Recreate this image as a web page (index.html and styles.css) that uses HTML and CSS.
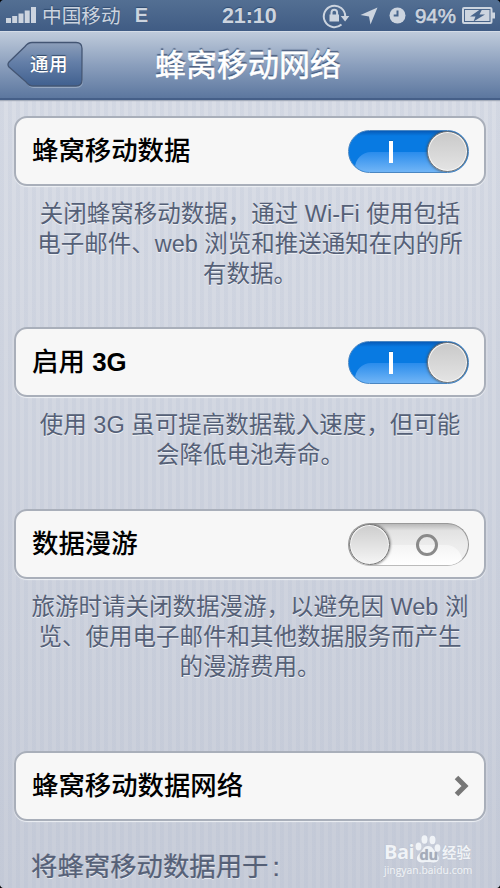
FILE: index.html
```html
<!DOCTYPE html>
<html lang="zh-CN">
<head>
<meta charset="utf-8">
<title>蜂窝移动网络</title>
<link rel="stylesheet" href="styles.css">
</head>
<body>
<div class="phone">
  <header class="status">
    <div class="status-left">
      <svg class="signal" width="31" height="18" viewBox="0 0 31 18"><path d="M0 12h5v5H0zM6.200 10h5v7h-5zM12.500 7.500h5V17h-5zM18.700 4.500h5V17h-5zM25 1h5v16h-5z"/></svg>
      <span class="carrier">中国移动</span>
      <b class="edge">E</b>
    </div>
    <b class="clock">21:10</b>
    <div class="status-right">
      <svg class="lock" width="28" height="26" viewBox="0 0 28 26"><path class="line" d="M19.500 21.500A10.700 10.700 0 1 1 23.200 13.500"/><path d="M18.700 13h8.600l-4.200 5.500zM7.500 11.500H17v7H7.500z"/><path class="line thin" d="M9.500 12V9.500a2.800 2.800 0 0 1 5.600 0V12"/></svg>
      <svg class="arrow" width="18" height="18" viewBox="0 0 18 18"><path d="M17.500.5 10.500 17.500 9 9.500.5 8z"/></svg>
      <svg class="alarm" width="17" height="17" viewBox="0 0 17 17"><circle cx="8.500" cy="8.500" r="8"/><path class="cut" d="M8.500 3.500v5H4.700"/></svg>
      <span class="percent">94%</span>
      <svg class="battery" width="34" height="18" viewBox="0 0 34 18"><rect class="line" x="1" y="1" width="28.500" height="15" rx="1"/><path d="M3 3h24.500v11H3zM30 5.500h3v6h-3z"/><path class="bolt" d="m18 2.500-10 7h5.500L11.500 14.500 23 7.500h-5.500L20 2.500z"/></svg>
    </div>
  </header>
  <nav class="nav">
    <div class="back">
      <svg width="78" height="49" viewBox="0 0 78 49">
        <defs><linearGradient id="bk" x1="0" y1="0" x2="0" y2="1"><stop offset="0" stop-color="#8d9fba"/><stop offset=".45" stop-color="#647fa8"/><stop offset="1" stop-color="#40608f"/></linearGradient></defs>
        <path class="back-glow" d="M24 2h45q7 0 7 7v31q0 7-7 7H27q-4 0-7-4L2.500 27q-1.500-2 0-4L17 6q3-4 7-4z"/>
        <path class="back-shape" d="M25 1.500h44q6 0 6 6V39q0 6-6 6H26q-4 0-7-4L2 26q-2-2.500 0-5L18 5.500q3-4 7-4z"/>
      </svg>
      <span>通用</span>
    </div>
    <h1>蜂窝移动网络</h1>
  </nav>
  <main>
    <section class="group g1">
      <div class="card"><span>蜂窝移动数据</span><div class="switch on"><i class="bar"></i><i class="knob"></i></div></div>
      <p>关闭蜂窝移动数据，通过 Wi-Fi 使用包括<br>电子邮件、web 浏览和推送通知在内的所<br>有数据。</p>
    </section>
    <section class="group g2">
      <div class="card"><span>启用 <b>3G</b></span><div class="switch on"><i class="bar"></i><i class="knob"></i></div></div>
      <p>使用 3G 虽可提高数据载入速度，但可能<br>会降低电池寿命。</p>
    </section>
    <section class="group g3">
      <div class="card"><span>数据漫游</span><div class="switch off"><i class="ring"></i><i class="knob"></i></div></div>
      <p>旅游时请关闭数据漫游，以避免因 Web 浏<br>览、使用电子邮件和其他数据服务而产生<br>的漫游费用。</p>
    </section>
    <section class="group g4">
      <div class="card"><span>蜂窝移动数据网络</span><svg class="chevron" width="15" height="22" viewBox="0 0 15 22"><path d="m2.500 2.500 8.500 8.500-8.500 8.500"/></svg></div>
    </section>
    <h2>将蜂窝移动数据用于<span>:</span></h2>
  </main>
  <div class="watermark">
    <div class="brand"><span class="bai">Bai</span>
      <svg width="26" height="29" viewBox="0 0 26 29"><ellipse cx="3.500" cy="11.500" rx="2.900" ry="4"/><ellipse cx="9.500" cy="4.500" rx="3" ry="4.200"/><ellipse cx="17.500" cy="5" rx="3" ry="4.200"/><ellipse cx="22.500" cy="13" rx="2.900" ry="3.800"/><path d="M13 11c5 0 6 5 9 8 4 5 1 9-4 8.500-4-.6-6-.6-10 0C2 28 0 23 4 19c4-3 4-8 9-8z"/><text x="4.500" y="25">du</text></svg>
      <span class="exp">经验</span></div>
    <div class="url">jingyan.baidu.com</div>
  </div>
  <i class="corner tl"></i><i class="corner tr"></i><i class="corner bl"></i><i class="corner br"></i>
</div>
</body>
</html>
```
FILE: styles.css
```css
* { box-sizing: border-box; }
body { margin: 0; font-family: "Liberation Sans", "Noto Sans CJK SC", sans-serif; }
.phone {
  position: relative; width: 500px; height: 888px; overflow: hidden;
  background:
    repeating-linear-gradient(90deg, rgba(150,165,195,.1) 0 4px, transparent 4px 8px),
    linear-gradient(#d9dde6 100px, #c8cdd9 888px);
}
.status {
  display: flex; align-items: center; height: 31px; padding: 0 4px 0 6px; position: relative;
  background: linear-gradient(#536f93, #405c84); color: #ccd4df;
  text-shadow: 0 -1px 1px #304c70;
}
.status svg { fill: #ccd4df; flex: none; }
.status .line { fill: none; stroke: #ccd4df; stroke-width: 2; }
.status-left, .status-right { display: flex; align-items: center; }
.signal { margin-top: -2px; }
.carrier { font-size: 19.700px; line-height: 30px; margin-left: 5px; }
.edge { font-size: 20px; margin-left: 14px; }
.clock { position: absolute; left: 222px; top: 4px; font-size: 21.500px; line-height: 25px; letter-spacing: -.1px; }
.status-right { margin-left: auto; }
.arrow { margin-left: 10px; }
.alarm { margin-left: 11px; }
.cut { fill: none; stroke: #48658c; stroke-width: 2; }
.percent { font-size: 20.500px; margin: 0 6px 0 9px; -webkit-text-stroke: .6px #ccd4df; }
.bolt { fill: #48658c; }
.nav {
  display: flex; align-items: center; height: 69px; padding-left: 7px;
  border-top: 1px solid #d4dce7; border-bottom: 2px solid #455f88;
  background: linear-gradient(#bfcbdb, #8b9fbd 50%, #5c779f);
  box-shadow: 0 1px 1px #a4acba;
}
.back { display: grid; width: 78px; height: 49px; }
.back > * { grid-area: 1 / 1; }
.back-glow { fill: #a6b6cc; opacity: .7; }
.back-shape { fill: url(#bk); stroke: #435573; stroke-width: 1.3; }
.back span { color: #fff; font-size: 18.500px; line-height: 48px; padding-left: 23px; z-index: 1; letter-spacing: .4px; text-shadow: 0 -1px 1px #304766; font-weight: 500; }
h1 { margin: 2px 0 0 70px; color: #fff; font-size: 31px; font-weight: 400; -webkit-text-stroke: .6px #fff; line-height: 60px; text-shadow: 0 -2px 1px #4b5f80; }
main { padding: 16px 14px 0; }
.group { display: flow-root; }
.g1 { height: 211px; }
.g2 { height: 182px; }
.g3 { height: 242px; }
.g4 { height: 71px; }
.card {
  display: flex; align-items: center; justify-content: space-between;
  height: 70px; padding: 0 16px; border: 2px solid #a9afba; border-radius: 13px;
  background: #f7f7f7; box-shadow: 0 1px 1px #eef1f5; color: #000;
}
.card span { font-size: 26.400px; line-height: 40px; font-weight: 500; }
.card b { font-size: 25.800px; }
p { margin: 13px 0 0; text-align: center; color: #556077; font-size: 23.500px; line-height: 30px; white-space: nowrap; text-shadow: 0 1px 0 #eef1f5; }
h2 { margin: 27px 0 0 17px; color: #556077; font-size: 26.400px; line-height: 36px; font-weight: 400; -webkit-text-stroke: .3px #556077; text-shadow: 0 1px 0 #eef1f5; white-space: nowrap; }
h2 span { margin-left: 4px; }
.switch { position: relative; width: 121px; height: 43px; border-radius: 22px; margin-right: -1px; overflow: hidden; }
.on { background: linear-gradient(#075bb8, #087ae2 12%); border: 1px solid #4a86c2; }
.switch::before { content: ""; position: absolute; left: 6px; right: 6px; top: 21px; bottom: 0; border-radius: 16px 16px 0 0; }
.on::before { background: linear-gradient(#2a8cec, #71b5f6); }
.off { background: linear-gradient(#b8b8b8, #e2e2e2 16%, #ececec 50%, #f4f4f4); border: 1px solid #999; border-bottom-color: #bbb; }
.off::before { background: linear-gradient(#f4f4f4, #fff); }
.knob { position: absolute; top: 0; width: 41px; height: 41px; border-radius: 50%; border: 1px solid #747474; background: linear-gradient(#c9c9c9, #e4e4e4); box-shadow: inset 0 0 0 1px #f5f5f5, 0 0 3px #444; }
.on .knob { right: 0; }
.off .knob { left: 0; background: linear-gradient(#cdcdcd, #f5f5f5); }
.bar { position: absolute; left: 40px; top: 10px; width: 4px; height: 22px; background: #fff; box-shadow: 0 -1px 0 #0868ba; }
.ring { position: absolute; left: 67px; top: 10px; width: 22px; height: 22px; border: 3px solid #8a8a8a; border-radius: 50%; }
.chevron { margin-right: -1px; }
.chevron path { fill: none; stroke: #777; stroke-width: 5; }
.watermark { position: absolute; left: 384px; top: 834px; color: #f0f3f7; text-shadow: 0 0 1px #aab1bf; }
.brand { display: flex; height: 30px; align-items: flex-end; }
.brand svg { fill: #f0f3f7; margin-left: 1px; }
.brand text { fill: #a4abba; font-size: 15px; font-weight: bold; }
.bai { font-family: "Open Sans", sans-serif; font-size: 20px; line-height: 24px; font-weight: bold; margin-bottom: 0; letter-spacing: -.5px; width: 30px; }
.exp { font-size: 14.500px; line-height: 22px; margin-left: 1px; font-weight: 700; }
.url { font-family: "Open Sans", sans-serif; font-size: 10.300px; line-height: 13px; letter-spacing: .05px; -webkit-text-stroke: .2px #f0f3f7; }
.corner { position: absolute; width: 5px; height: 5px; }
.tl { left: 0; top: 0; background: radial-gradient(circle at 100% 100%, transparent 5px, #000 6px); }
.tr { right: 0; top: 0; background: radial-gradient(circle at 0 100%, transparent 5px, #000 6px); }
.bl { left: 0; bottom: 0; background: radial-gradient(circle at 100% 0, transparent 5px, #000 6px); }
.br { right: 0; bottom: 0; background: radial-gradient(circle at 0 0, transparent 5px, #000 6px); }
```
